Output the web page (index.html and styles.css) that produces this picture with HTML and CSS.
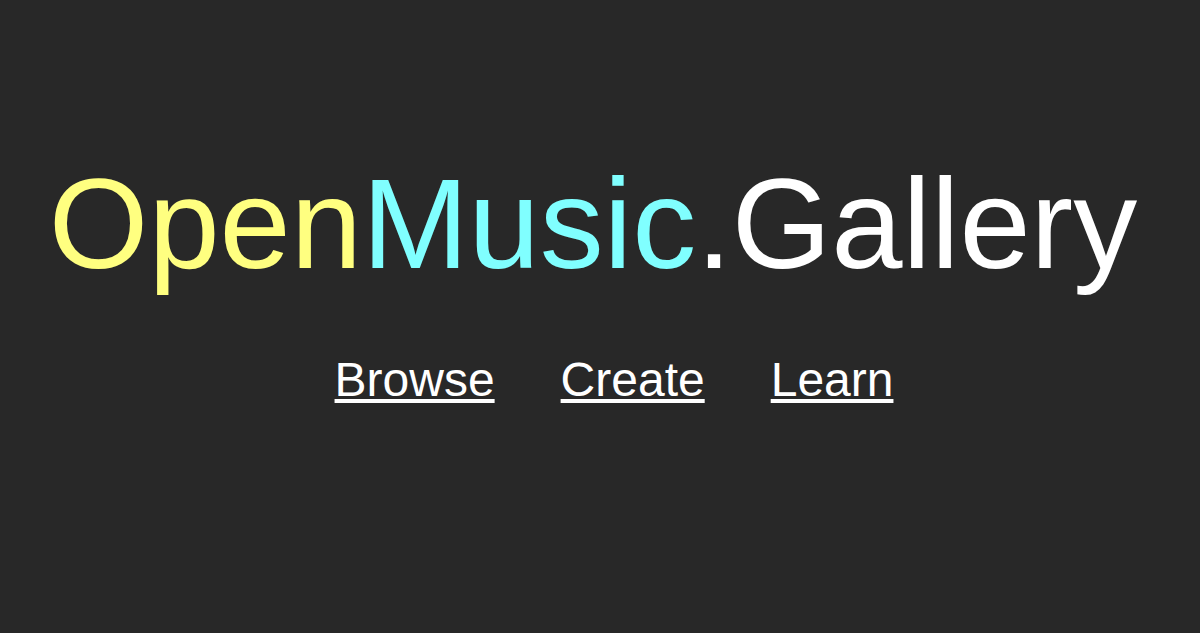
FILE: index.html
```html
<!DOCTYPE html>
<html>
<head>
<meta charset="utf-8">
<link rel="stylesheet" href="styles.css">
</head>
<body>
<main class="home">
  <h1 class="title"><span class="open">Open</span><span class="music">Music</span><span class="gallery">.Gallery</span></h1>
  <nav class="links">
    <a href="#" class="link">Browse</a>
    <a href="#" class="link">Create</a>
    <a href="#" class="link">Learn</a>
  </nav>
</main>
</body>
</html>
```
FILE: styles.css
```css
html, body {
  margin: 0;
  padding: 0;
  background: #282828;
  height: 100%;
}
body {
  font-family: "Liberation Sans", Arial, sans-serif;
  color: #ffffff;
}
.home {
  display: flex;
  flex-direction: column;
  align-items: center;
  padding-top: 160px;
}
.title {
  margin: 0 14px 0 0;
  font-size: 128px;
  font-weight: normal;
  line-height: 1;
  white-space: nowrap;
}
.open { color: #ffff80; }
.music { color: #80ffff; }
.gallery { color: #ffffff; }
.links {
  display: flex;
  gap: 66px;
  margin: 68px 0 0 28px;
  font-size: 48px;
  line-height: 1;
}
.link {
  color: #ffffff;
  text-decoration: underline;
}
```
